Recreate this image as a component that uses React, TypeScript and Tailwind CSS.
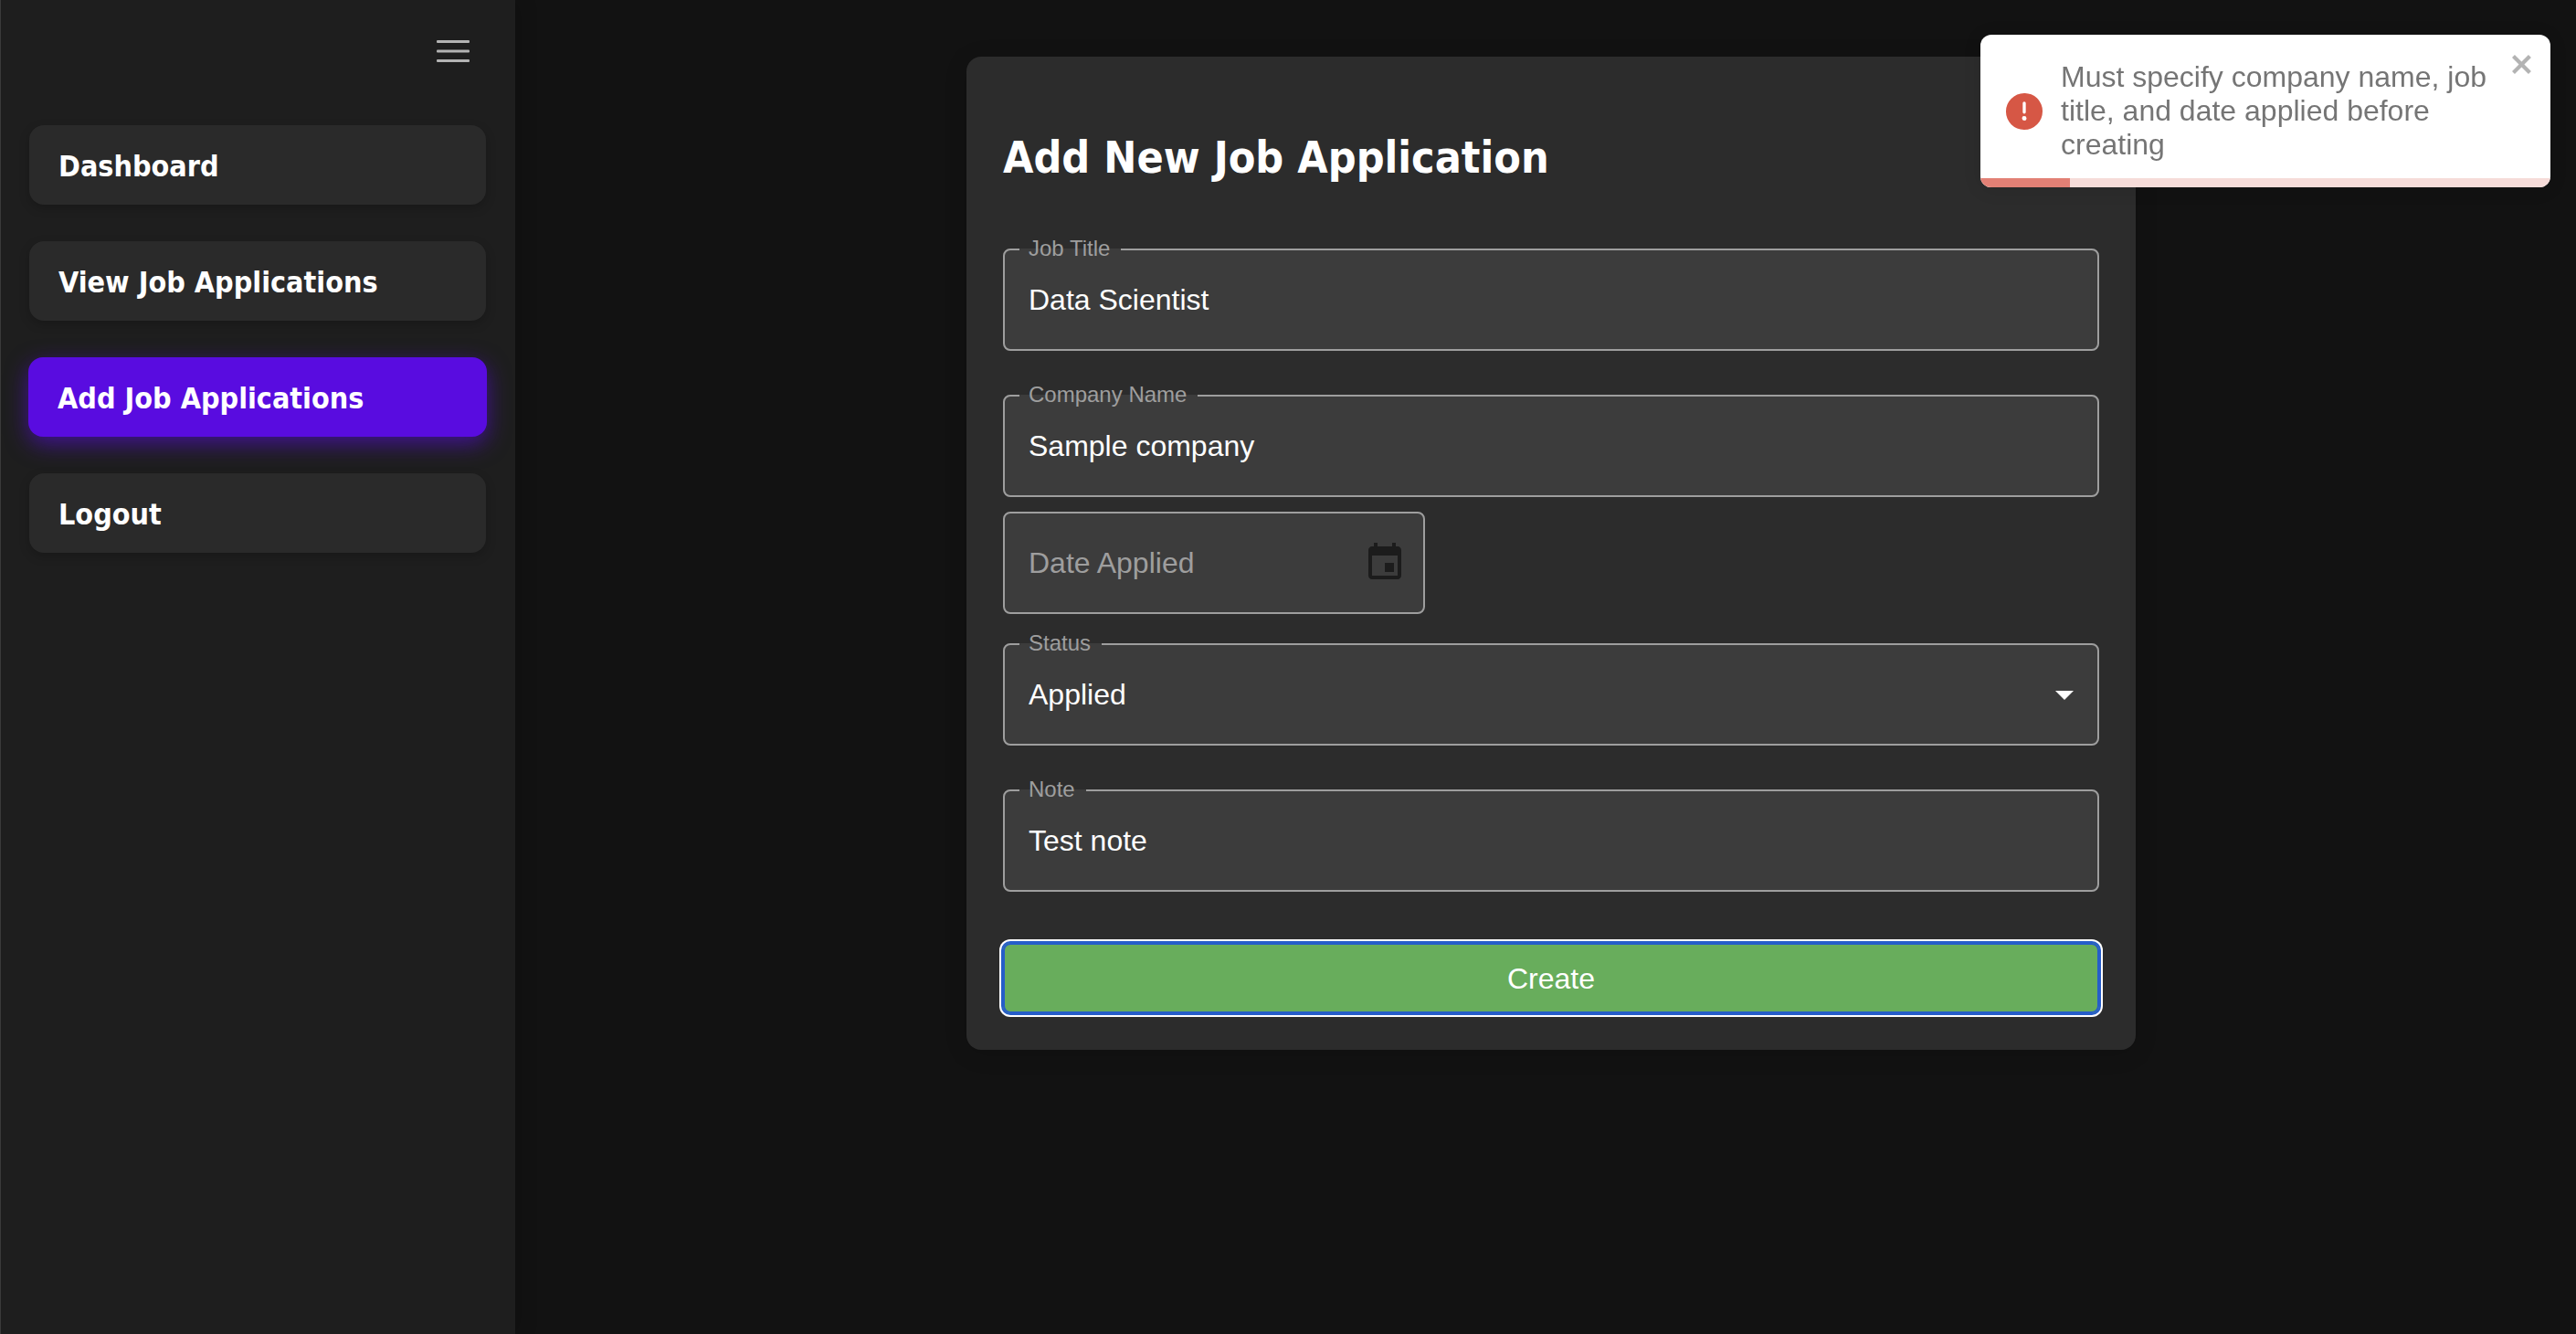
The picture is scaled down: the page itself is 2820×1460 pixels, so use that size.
import { useState } from 'react';
import type { ReactNode } from 'react';

const navItems = ['Dashboard', 'View Job Applications', 'Add Job Applications', 'Logout'];

function Sidebar() {
  const active = 'Add Job Applications';
  return (
    <aside className="z-10 w-[564px] shrink-0 border-l border-[#3a3a3a] bg-[#1e1e1e] shadow-[4px_0_20px_rgba(0,0,0,0.15)]">
      <div className="flex h-[137px] justify-end pt-11 pr-[50px]">
        <button type="button" aria-label="Toggle menu" className="h-6 text-[#b3b3b3]">
          <svg width="36" height="24" viewBox="0 0 36 24" fill="currentColor">
            <rect width="36" height="3" rx="1" />
            <rect y="10.5" width="36" height="3" rx="1" />
            <rect y="21" width="36" height="3" rx="1" />
          </svg>
        </button>
      </div>
      <nav className="flex flex-col gap-10 pr-8 pl-[31px]">
        {navItems.map((item) => (
          <a
            key={item}
            href="#"
            aria-current={item === active ? 'page' : undefined}
            className={
              "flex h-[87px] items-center rounded-2xl pt-0.5 font-['DejaVu_Sans_Condensed',sans-serif] text-[32px] leading-10 font-bold text-white " +
              (item === active
                ? '-mx-px bg-[#590ce0] px-8 shadow-[0_8px_24px_rgba(89,12,224,0.6)]'
                : 'bg-[#2a2a2a] px-8 shadow-[0_4px_12px_rgba(0,0,0,0.2)]')
            }
          >
            {item}
          </a>
        ))}
      </nav>
    </aside>
  );
}

const controlClass = 'block h-28 w-full rounded-lg bg-[#3c3c3c] px-7 text-[32px] text-white outline-none';

function OutlinedField({ id, label, children }: { id: string; label: string; children: ReactNode }) {
  return (
    <div className="relative">
      {children}
      <fieldset className="pointer-events-none absolute inset-x-0 -top-3 bottom-0 min-w-0 rounded-lg border-2 border-[#9e9e9e] px-4">
        <legend className="pr-3 pb-0.5 pl-2.5 text-2xl leading-6 text-[#9e9e9e]">
          <label htmlFor={id} className="block">{label}</label>
        </legend>
      </fieldset>
    </div>
  );
}

function JobForm() {
  const [title, setTitle] = useState('Data Scientist');
  const [company, setCompany] = useState('Sample company');
  const [date, setDate] = useState('');
  const [status, setStatus] = useState('Applied');
  const [note, setNote] = useState('Test note');

  return (
    <form
      onSubmit={(e) => e.preventDefault()}
      className="mt-[62px] w-full max-w-[1280px] rounded-2xl bg-[#2c2c2c] px-10 pt-[82px] pb-10 shadow-[0_4px_24px_rgba(0,0,0,0.15)]"
    >
      <h1 className="font-['DejaVu_Sans_Condensed',sans-serif] text-5xl leading-[56px] font-bold text-white">
        Add New Job Application
      </h1>
      <div className="mt-[72px] flex flex-col gap-12">
        <OutlinedField id="title" label="Job Title">
          <input id="title" type="text" value={title} onChange={(e) => setTitle(e.target.value)} className={controlClass} />
        </OutlinedField>
        <OutlinedField id="company" label="Company Name">
          <input id="company" type="text" value={company} onChange={(e) => setCompany(e.target.value)} className={controlClass} />
        </OutlinedField>
      </div>
      <div className="mt-4 flex h-28 w-[462px] items-center rounded-lg border-2 border-[#9e9e9e] bg-[#3c3c3c] pr-[18px] pl-[26px]">
        <input
          type="text"
          aria-label="Date Applied"
          placeholder="Date Applied"
          value={date}
          onChange={(e) => setDate(e.target.value)}
          className="h-full min-w-0 flex-1 text-[32px] text-white outline-none placeholder:text-[#9e9e9e] placeholder:opacity-100"
        />
        <button type="button" aria-label="Choose date" className="text-[#1c1c1c]">
          <svg className="size-12" viewBox="0 0 24 24" fill="currentColor">
            <path d="M17 12h-5v5h5v-5zM16 1v2H8V1H6v2H5c-1.11 0-1.99.9-1.99 2L3 19c0 1.1.89 2 2 2h14c1.1 0 2-.9 2-2V5c0-1.1-.9-2-2-2h-1V1h-2zm3 18H5V8h14v11z" />
          </svg>
        </button>
      </div>
      <div className="mt-8 flex flex-col gap-12">
        <OutlinedField id="status" label="Status">
          <select
            id="status"
            value={status}
            onChange={(e) => setStatus(e.target.value)}
            className={controlClass + ' appearance-none'}
          >
            <option>Applied</option>
            <option>Interview</option>
            <option>Offer</option>
            <option>Rejected</option>
          </select>
          <svg className="pointer-events-none absolute top-8 right-3.5 size-12 text-white" viewBox="0 0 24 24" fill="currentColor">
            <path d="M7 10l5 5 5-5z" />
          </svg>
        </OutlinedField>
        <OutlinedField id="note" label="Note">
          <input id="note" type="text" value={note} onChange={(e) => setNote(e.target.value)} className={controlClass} />
        </OutlinedField>
      </div>
      <button
        type="submit"
        className="mt-14 block h-[77px] w-full rounded-lg bg-[#68ad5c] text-[32px] text-white shadow-[inset_0_0_0_2px_#265dc9,0_0_0_2px_#265dc9,0_0_0_4px_#ffffff]"
      >
        Create
      </button>
    </form>
  );
}

function Toast() {
  return (
    <div
      role="alert"
      className="fixed top-[38px] right-7 z-20 w-[624px] overflow-hidden rounded-xl bg-white p-4 shadow-[0_2px_20px_rgba(0,0,0,0.1)]"
    >
      <div className="flex items-start">
        <div className="flex flex-1 items-center gap-5 p-3">
          <svg className="size-10 shrink-0" viewBox="0 0 24 24" fill="#d65745">
            <path d="M11.983 0a12.206 12.206 0 00-8.51 3.653A11.8 11.8 0 000 12.207 11.779 11.779 0 0011.8 24h.214A12.111 12.111 0 0024 11.791 11.766 11.766 0 0011.983 0zM10.5 16.542a1.476 1.476 0 011.449-1.53h.027a1.527 1.527 0 011.523 1.47 1.475 1.475 0 01-1.449 1.53h-.027a1.529 1.529 0 01-1.523-1.47zM11 12.5v-6a1 1 0 012 0v6a1 1 0 11-2 0z" />
          </svg>
          <p className="flex-1 text-[32px] leading-[37px] text-[#757575]">
            Must specify company name, job title, and date applied before creating
          </p>
        </div>
        <button type="button" aria-label="close" className="text-[#b3b3b3]">
          <svg className="h-8 w-7" viewBox="0 0 14 16" fill="currentColor">
            <path d="M7.71 8.23l3.75 3.75-1.48 1.48-3.75-3.75-3.75 3.75L1 11.98l3.75-3.75L1 4.48 2.48 3l3.75 3.75L9.98 3l1.48 1.48-3.75 3.75z" />
          </svg>
        </button>
      </div>
      <div className="absolute inset-x-0 bottom-0 h-2.5 bg-[#f6dcd9]">
        <div className="h-full w-[98px] bg-[#e28075]" />
      </div>
    </div>
  );
}

export default function App() {
  return (
    <div className="flex min-h-screen bg-[#121212] font-['Liberation_Sans',Arial,sans-serif]">
      <Sidebar />
      <main className="flex flex-1 items-start justify-center pl-3">
        <JobForm />
      </main>
      <Toast />
    </div>
  );
}
